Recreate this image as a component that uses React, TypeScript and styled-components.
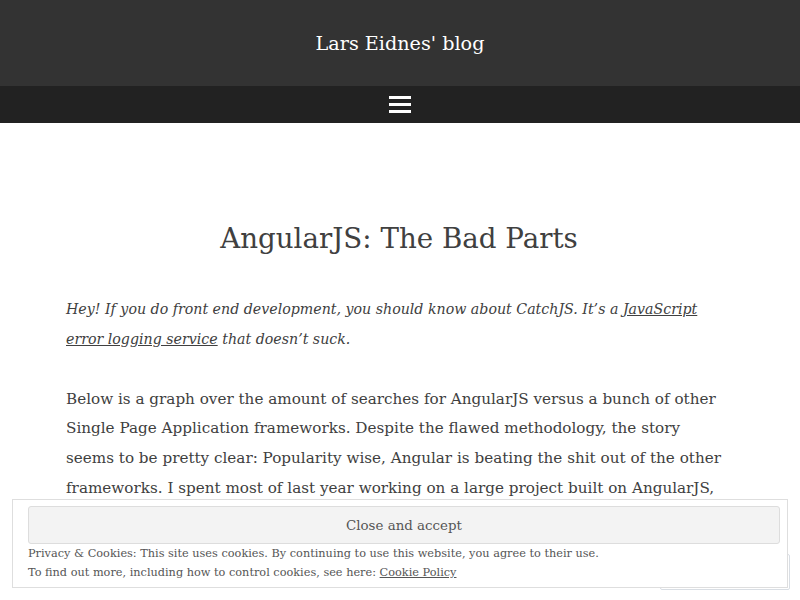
import React from "react";
import styled, { createGlobalStyle } from "styled-components";

const Global = createGlobalStyle`
  html, body { margin: 0; padding: 0; background: #ffffff; }
  body { font-family: "DejaVu Serif", "Liberation Serif", serif; color: #404040; }
`;

const Header = styled.header`
  background: #333333;
  height: 86px;
  display: flex;
  align-items: center;
  justify-content: center;
`;

const SiteTitle = styled.h1`
  margin: 0;
  font-family: "DejaVu Serif", serif;
  font-weight: 400;
  font-size: 19.2px;
  color: #ffffff;
`;

const Nav = styled.nav`
  background: #222222;
  height: 37px;
  display: flex;
  align-items: center;
  justify-content: center;
`;

const MenuButton = styled.button`
  background: none;
  border: 0;
  padding: 0;
  display: flex;
  cursor: pointer;
`;

const Main = styled.main`
  padding: 98px 68px 120px 66px;
`;

const Title = styled.h2`
  margin: 0 0 38px;
  text-align: center;
  font-weight: 400;
  font-size: 27.7px;
  line-height: 36px;
  color: #404040;
`;

const Para = styled.p<{ $italic?: boolean }>`
  margin: 0 0 30px;
  font-size: ${(p) => (p.$italic ? "14.2px" : "15.2px")};
  line-height: 29.8px;
  font-style: ${(p) => (p.$italic ? "italic" : "normal")};
  color: #404040;
  a { color: #404040; text-decoration: underline; }
`;

const FollowBox = styled.div`
  position: fixed;
  right: 10px;
  bottom: 10px;
  width: 128px;
  height: 34px;
  background: #ffffff;
  border: 1px solid #d9dee4;
  border-radius: 2px;
`;

const Banner = styled.div`
  position: fixed;
  left: 12px;
  right: 12px;
  bottom: 12px;
  background: #ffffff;
  border: 1px solid #dedede;
  padding: 6px 7px 5px 15px;
  box-sizing: border-box;
  height: 89px;
`;

const AcceptButton = styled.button`
  display: block;
  width: 100%;
  height: 38px;
  background: #f3f3f3;
  border: 1px solid #dddddd;
  border-radius: 3px;
  font-family: "DejaVu Serif", serif;
  font-size: 13.4px;
  color: #555555;
  cursor: pointer;
`;

const BannerText = styled.div`
  font-size: 11.3px;
  line-height: 19px;
  color: #555555;
  a { color: #555555; text-decoration: underline; }
`;

export default function App() {
  return (
    <>
      <Global />
      <Header>
        <SiteTitle>Lars Eidnes' blog</SiteTitle>
      </Header>
      <Nav>
        <MenuButton aria-label="Menu">
          <svg width="22" height="17" viewBox="0 0 22 17">
            <rect x="0" y="0" width="22" height="3" fill="#ffffff" />
            <rect x="0" y="7" width="22" height="3" fill="#ffffff" />
            <rect x="0" y="14" width="22" height="3" fill="#ffffff" />
          </svg>
        </MenuButton>
      </Nav>
      <Main>
        <Title>AngularJS: The Bad Parts</Title>
        <Para $italic>
          Hey! If you do front end development, you should know about CatchJS. It’s a{" "}
          <a href="#">JavaScript error logging service</a> that doesn’t suck.
        </Para>
        <Para>
          Below is a graph over the amount of searches for AngularJS versus a bunch of other
          Single Page Application frameworks. Despite the flawed methodology, the story seems to
          be pretty clear: Popularity wise, Angular is beating the shit out of the other
          frameworks. I spent most of last year working on a large project built on AngularJS,
          and I’ve gotten to know the framework in some depth. Through this work I have learned
          that Angular is built around some really bad ideas that make it a pain to work with,
          and that we need to come up with something better.
        </Para>
      </Main>
      <FollowBox />
      <Banner>
        <AcceptButton>Close and accept</AcceptButton>
        <BannerText>
          Privacy &amp; Cookies: This site uses cookies. By continuing to use this website, you
          agree to their use.
          <br />
          To find out more, including how to control cookies, see here:{" "}
          <a href="#">Cookie Policy</a>
        </BannerText>
      </Banner>
    </>
  );
}
